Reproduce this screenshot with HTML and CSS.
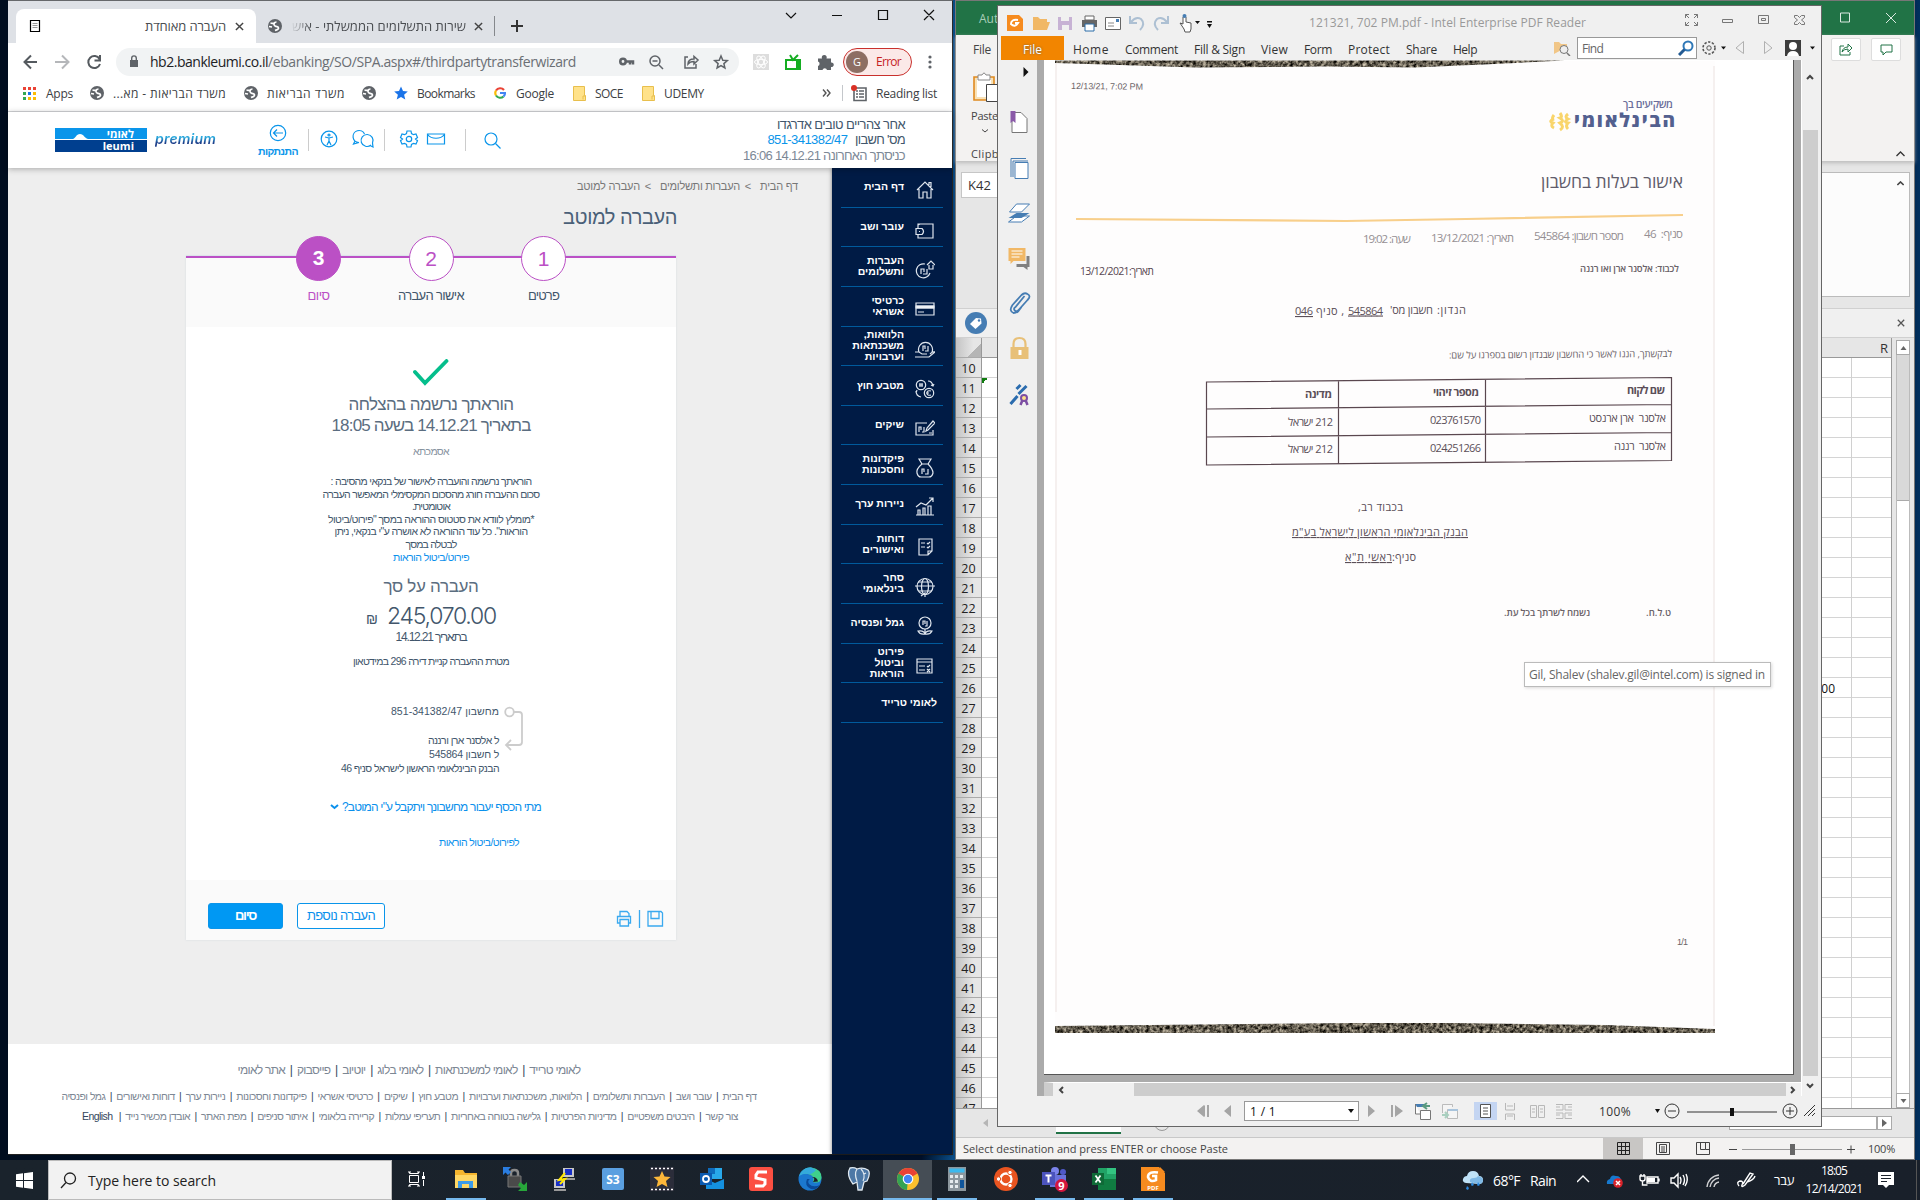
FILE: index.html
```html
<!DOCTYPE html>
<html lang="en">
<head>
<meta charset="utf-8">
<title>Desktop</title>
<link rel="stylesheet" href="styles.css">
</head>
<body>
<svg class="defs" width="0" height="0">
  <symbol id="globe" viewBox="0 0 16 16"><circle cx="8" cy="8" r="7" fill="#5f6368"/><path d="M3.500 5c1.500.3 2.500 1 4 0M9.500 4C7 4 6 7 8 8s3.500 0 3.500 2-2.500 2-3.500 2.500M2 8.500l3 .5" fill="none" stroke="#fff" stroke-width="1.700"/></symbol>
  <symbol id="x" viewBox="0 0 10 10"><path d="M1 1l8 8M9 1L1 9" fill="none" stroke="currentColor" stroke-width="1.600"/></symbol>
  <symbol id="folder" viewBox="0 0 13 15"><path d="M.5.5h11v9h1v5H.5z" fill="#ffe28a" stroke="#e8bf4d"/><path d="M10 13.500V10h2" fill="none" stroke="#e8bf4d"/></symbol>
  <symbol id="down" viewBox="0 0 6 4"><path d="M0 0h6L3 4z" fill="#111"/></symbol>
</svg>

<div class="desktop">

<!-- Browser window -->
<section class="chrome">
  <div class="tabstrip">
    <div class="tab active">
      <svg width="12" height="14" viewBox="0 0 12 14"><path d="M1.500 1.500h9v11h-9z" fill="#fff" stroke="#000" stroke-width="1.200"/><path d="M3.500 4.500h5M3.500 6.500h5M3.500 8.500h5" stroke="#999"/></svg>
      <span class="tab-title" dir="rtl" data-w="81">העברה מאוחדת</span>
      <svg class="tx" width="9" height="9"><use href="#x"/></svg>
    </div>
    <div class="tab">
      <svg width="16" height="16"><use href="#globe"/></svg>
      <span class="tab-title faded" dir="rtl" data-w="174">שירות התשלומים הממשלתי - איש</span>
      <svg class="tx" width="9" height="9"><use href="#x"/></svg>
    </div>
    <svg class="plus" width="14" height="14" viewBox="0 0 14 14"><path d="M7 1v12M1 7h12" stroke="#333" stroke-width="2"/></svg>
    <svg class="wc" width="160" height="14" viewBox="0 0 160 14"><path d="M6 5l5 5 5-5M52 7.500h10M98.500 2.500h9v9h-9zM144 2l10 10M154 2l-10 10" fill="none" stroke="#111" stroke-width="1.200"/></svg>
  </div>
  <div class="toolbar">
    <svg class="nav" width="84" height="16" viewBox="0 0 84 16"><g fill="none" stroke-width="2"><path d="M15 8H2.500M9 1.500 2.500 8 9 14.500" stroke="#555a5f"/><path d="M33 8h13M40 1.500 46.500 8 40 14.500" stroke="#b5b7ba"/><path d="M77.500 5A6 6 0 1 0 78 10M78 1v5.500H72.500" stroke="#555a5f"/></g></svg>
    <div class="omnibox">
      <svg width="10" height="13" viewBox="0 0 10 13"><path d="M1 5h8v7H1z" fill="#5f6368"/><path d="M2.700 5V3.200a2.300 2.300 0 0 1 4.600 0V5" fill="none" stroke="#5f6368" stroke-width="1.400"/></svg>
      <span class="url"><span data-w="118">hb2.bankleumi.co.il</span><span class="path" data-w="308">/ebanking/SO/SPA.aspx#/thirdpartytransferwizard</span></span>
      <svg class="oicons" width="112" height="16" viewBox="0 0 112 16"><g fill="none" stroke="#5f6368" stroke-width="1.500"><circle cx="5" cy="7.500" r="2.700" stroke-width="2.600"/><path d="M8 7.500h7v3M12 7.500v3" stroke-width="2.500"/><circle cx="37" cy="7" r="5"/><path d="M34.500 7h5M41 11l4 4"/><path d="M70 3h-3v11h11v-4"/><path d="M70 10c0-4 3-5 6-5V2.500L80 6l-4 4V7.500c-3 0-4.500.5-6 2.500z"/><path d="M103 2l1.800 4.200 4.500.4-3.400 3 1 4.400-3.900-2.400L99.100 14l1-4.400-3.400-3 4.500-.4z"/></g></svg>
    </div>
    <svg class="ext" width="82" height="18" viewBox="0 0 82 18"><path d="M1 1h16v16H1z" fill="#ddd"/><g fill="none" stroke="#fff"><ellipse cx="9" cy="9" rx="6.500" ry="2.700"/><ellipse cx="9" cy="9" rx="6.500" ry="2.700" transform="rotate(60 9 9)"/><ellipse cx="9" cy="9" rx="6.500" ry="2.700" transform="rotate(120 9 9)"/></g><path d="M34 7h14v9H34zM38 2l3 5 5-5" fill="none" stroke="#15ad22" stroke-width="2"/><path d="M44 7h4v9h-4z" fill="#15ad22"/><path d="M66 5.500h4a2.500 2.500 0 1 1 4.500 0H79v4a2.300 2.300 0 1 1 0 4.500v3h-4a2.300 2.300 0 0 0-4.500 0H66v-4a2.400 2.400 0 0 0 0-4.500z" fill="#5f6368"/></svg>
    <div class="profile"><span class="avatar">G</span><span data-w="25">Error</span></div>
    <svg width="4" height="14" viewBox="0 0 4 14"><g fill="#5f6368"><circle cx="2" cy="2" r="1.600"/><circle cx="2" cy="7" r="1.600"/><circle cx="2" cy="12" r="1.600"/></g></svg>
  </div>
  <div class="bookmarks">
    <svg width="13" height="13" viewBox="0 0 13 13"><path d="M0 0h3v3H0zM5 0h3v3H5zM10 0h3v3h-3z" fill="#ea4335"/><path d="M0 5h3v3H0zM0 10h3v3H0z" fill="#34a853"/><path d="M5 5h3v3H5z" fill="#1a73e8"/><path d="M10 5h3v3h-3zM5 10h3v3H5zM10 10h3v3h-3z" fill="#fbbc04"/></svg>
    <span data-w="27">Apps</span>
    <svg width="16" height="16"><use href="#globe"/></svg>
    <span dir="ltr" data-w="113">...משרד הבריאות - מא</span>
    <svg width="16" height="16"><use href="#globe"/></svg>
    <span dir="rtl" data-w="78">משרד הבריאות</span>
    <svg width="16" height="16"><use href="#globe"/></svg>
    <svg width="14" height="14" viewBox="0 0 14 14"><path d="M7 .5l2 4.600 4.800.4-3.700 3.200 1.200 4.800L7 11l-4.300 2.500 1.200-4.800L.2 5.500 5 5.100z" fill="#1a73e8"/></svg>
    <span data-w="58">Bookmarks</span>
    <svg width="12" height="12" viewBox="0 0 12 12"><g fill="none" stroke-width="2.200"><path d="M10 3A5 5 0 0 0 2 3.500" stroke="#ea4335"/><path d="M2 3.500a5 5 0 0 0 0 5" stroke="#fbbc04"/><path d="M2 8.500a5 5 0 0 0 7.500 1" stroke="#34a853"/><path d="M6 6h5a5 5 0 0 1-1.500 3.500" stroke="#4285f4"/></g></svg>
    <span data-w="38">Google</span>
    <svg width="13" height="15"><use href="#folder"/></svg>
    <span data-w="28">SOCE</span>
    <svg width="13" height="15"><use href="#folder"/></svg>
    <span data-w="40">UDEMY</span>
    <svg width="9" height="8" viewBox="0 0 9 8"><path d="M1 .5 4 4 1 7.500M5 .5 8 4 5 7.500" fill="none" stroke="#555" stroke-width="1.400"/></svg>
    <i class="bsep"></i>
    <svg width="16" height="17" viewBox="0 0 16 17"><path d="M3 3h12v12.500H3z" fill="none" stroke="#5f6368" stroke-width="1.600"/><path d="M5 6h2M5 9h2M5 12h2M8 6h5M8 9h5M8 12h5" stroke="#5f6368" stroke-width="1.400"/><circle cx="3" cy="3" r="3" fill="#d93025"/></svg>
    <span data-w="61">Reading list</span>
  </div>

  <header class="bank-head">
    <div class="leumi"><b dir="rtl">לאומי</b><b>leumi</b><svg width="20" height="6" viewBox="0 0 20 6"><path d="M2 6c3-1 3-5 7-5s4 4 8 5z" fill="#fff"/></svg></div>
    <span class="premium" data-w="61">premium</span>
    <div class="logout"><svg width="18" height="18" viewBox="0 0 18 18"><g fill="none" stroke="#0a95ea" stroke-width="1.200"><circle cx="9" cy="9" r="7.700"/><path d="M14 9H4.500M8 5.500 4.500 9 8 12.500"/></g></svg><span dir="rtl" data-w="40">התנתקות</span></div>
    <svg class="hicons" width="200" height="24" viewBox="0 0 200 24"><path d="M3.500 1v22M79.500 1v22M160.500 1v22" stroke="#ccc"/><g fill="none" stroke="#0a95ea" stroke-width="1.200"><circle cx="24" cy="11" r="7.800"/><path d="M20 9l4 1 4-1M24 10v3l-2 4M24 13l2 4"/><circle cx="24" cy="7" r="1"/><path d="M54 14.500A6 6 0 1 1 59.500 6M54 14.500 48.500 16l1.500-3"/><path d="M66 17a6 6 0 1 1 1.500-2l.5 4-3-1.500"/><circle cx="104" cy="11" r="2.700"/><path d="M102 3h4l.5 2.500 2 1.200 2.500-.7 1.500 3.500-2 1.500 2 1.700-1.500 3.300-2.500-.7-2 1.200-.5 2.500h-4l-.5-2.500-2-1.200-2.500.7-1.500-3.300 2-1.700-2-1.500L97 6l2.500.7 2-1.200z"/><path d="M122.500 6h17v10h-17zM122.500 6.500c4 5 13 5 17 0"/><circle cx="186" cy="11" r="6"/><path d="M190.500 15.500l5 5"/></g></svg>
    <div class="greet" dir="rtl"><span data-w="128">אחר צהריים טובים אדרגדו</span><span><span data-w="50">מס' חשבון</span> <em data-w="80" dir="ltr">851-341382/47</em></span><span class="last" data-w="162">כניסתך האחרונה 14.12.21 16:06</span></div>
  </header>

  <div class="bank-main">
    <div class="content" dir="rtl">
      <nav class="crumbs"><span data-w="38">דף הבית</span><i>&gt;</i><span data-w="80">העברות ותשלומים</span><i>&gt;</i><span data-w="63">העברה למוטב</span></nav>
      <h1><span data-w="114">העברה למוטב</span></h1>
      <div class="card">
        <ol class="steps">
          <li><b>1</b><span data-w="31">פרטים</span></li>
          <li><b>2</b><span data-w="66">אישור העברה</span></li>
          <li class="on"><b>3</b><span data-w="22">סיום</span></li>
        </ol>
        <div class="result">
          <svg class="check" width="36" height="27" viewBox="0 0 36 27"><path d="M2 13l10 11L33.500 2" fill="none" stroke="#05be8c" stroke-width="3.800" stroke-linecap="round"/></svg>
          <p class="big"><span data-w="165">הוראתך נרשמה בהצלחה</span></p>
          <p class="big"><span data-w="199">בתאריך 14.12.21 בשעה 18:05</span></p>
          <p class="ref"><span data-w="36">אסמכתא</span></p>
          <div class="note">
            <p><span data-w="201">הוראתך נרשמה והועברה לאישור של בנקאי מהסיבה :</span></p>
            <p><span data-w="217">סכום ההעברה חורג מהסכום המקסימלי המאפשר העברה</span></p>
            <p><span data-w="38">אוטומטית.</span></p>
            <p><span data-w="206">*מומלץ לוודא את סטטוס ההוראה במסך "פירוט/ביטול</span></p>
            <p><span data-w="193">הוראות". כל עוד ההוראה לא אושרה ע"י בנקאי, ניתן</span></p>
            <p><span data-w="51">לבטלה במסך</span></p>
            <p class="link"><span data-w="76">פירוט/ביטול הוראות</span></p>
          </div>
          <p class="sumlabel"><span data-w="95">העברה על סך</span></p>
          <p class="amount"><span data-w="109">245,070.00</span><small>₪</small></p>
          <p class="on-date"><span data-w="71">בתאריך 14.12.21</span></p>
          <p class="purpose"><span data-w="156">מטרת ההעברה קניית דירה 296 במידטאון</span></p>
          <div class="route">
            <svg width="20" height="46" viewBox="0 0 20 46"><g fill="none" stroke="#ccc" stroke-width="1.800"><circle cx="5.500" cy="6" r="4.300"/><path d="M10 6h5q3 0 3 3v27q0 3-3 3H2M7 34l-5 5 5 5"/></g></svg>
            <div class="lines">
              <p><span data-w="108">מחשבון 851-341382/47</span></p>
              <p class="gap"><span data-w="71">ל אלסנר ארן ורננה</span></p>
              <p><span data-w="70">ל חשבון 545864</span></p>
              <p><span data-w="158">הבנק הבינלאומי הראשון לישראל סניף 46</span></p>
            </div>
          </div>
          <p class="when link"><span data-w="199">מתי הכסף יעבור מחשבונך ויתקבל ע"י המוטב?</span><svg width="9" height="6" viewBox="0 0 9 6"><path d="M1 1l3.500 3L8 1" fill="none" stroke="#0a90ec" stroke-width="2"/></svg></p>
          <p class="details link"><span data-w="80">לפירוט/ביטול הוראות</span></p>
        </div>
        <div class="actions">
          <svg class="io" width="48" height="18" viewBox="0 0 48 18"><g fill="none" stroke="#3aa9ef" stroke-width="1.300"><path d="M4 6V1.500h7l2 2V6M3.500 13H1.500V6.500h13V13h-2M4 9.500h8.500v6.500H4z"/><path d="M23.500 0v18"/><path d="M32 1.500h13l1.500 1.500v13H32zM35 1.500v7h8v-7"/></g></svg>
          <a class="btn ghost"><span data-w="68">העברה נוספת</span></a>
          <a class="btn solid"><span data-w="21">סיום</span></a>
        </div>
      </div>
      <footer class="bank-foot">
        <p class="f1"><span data-w="343">לאומי טרייד <i>|</i> לאומי למשכנתאות <i>|</i> לאומי בלוג <i>|</i> יוטיוב <i>|</i> פייסבוק <i>|</i> אתר לאומי</span></p>
        <p class="f2"><span data-w="695">דף הבית <i>|</i> עובר ושב <i>|</i> העברות ותשלומים <i>|</i> הלוואות, משכנתאות וערבויות <i>|</i> מטבע חוץ <i>|</i> שיקים <i>|</i> כרטיסי אשראי <i>|</i> פיקדונות וחסכונות <i>|</i> ניירות ערך <i>|</i> דוחות ואישורים <i>|</i> גמל ופנסיה</span></p>
        <p class="f3"><span data-w="658">צור קשר <i>|</i> היבטים משפטיים <i>|</i> מדיניות הפרטיות <i>|</i> גלישה בטוחה באחריות <i>|</i> תעריפי עמלות <i>|</i> קריירה בלאומי <i>|</i> איתור סניפים <i>|</i> מפת האתר <i>|</i> אובדן מכשיר נייד <i>|</i> <i>English</i></span></p>
      </footer>
    </div>
    <ul class="side" dir="rtl">
      <li><svg viewBox="0 0 20 20"><path d="M2 10l8-8 8 8M4 9v9h4v-6h4v6h4V9M14 5V2.500h2V7"/></svg><span>דף הבית</span></li>
      <li><svg viewBox="0 0 20 20"><path d="M3 8V4h15v14H3v-3M3 5l2-1M1 8.500h6q3 3 0 6H1zM4 11.500h1"/></svg><span>עובר ושב</span></li>
      <li><svg viewBox="0 0 20 20"><path d="M15 13a7 7 0 1 1-5-9M6 14V9h3v3M8 14h4V9M12 5l4-4 4 4M14 5v4h4V5"/></svg><span>העברות<br>ותשלומים</span></li>
      <li><svg viewBox="0 0 20 20"><path d="M1 4h18v12H1zM1 7h18M1 9h18M3 13h6"/><path d="M1 7h18v2H1z" fill="#fff"/></svg><span>כרטיסי<br>אשראי</span></li>
      <li><svg viewBox="0 0 20 20"><path d="M4 13a7 7 0 1 1 13 0M8 12V7h2v3M10 12h3V7M0 13h4l3 2h5M0 18h14l6-5q-2-1-5 2"/></svg><span>הלוואות,<br>משכנתאות<br>וערבויות</span></li>
      <li><svg viewBox="0 0 20 20"><circle cx="6" cy="6" r="4.700"/><circle cx="14" cy="14" r="4.700"/><path d="M5 4v4M7 4v4M4 6h4M16 12q-4-1-4 2t4 2M11 14h3M13 2q4 0 5 5M16 6l2 1 1-2M1 12q0 5 5 6M1 14l1-3"/></svg><span>מטבע חוץ</span></li>
      <li><svg viewBox="0 0 20 20"><path d="M12 5H1v12h17v-5M4 14V9h2v3M7 14h2V9M11 13l1-3 6-7 2 2-7 7zM14 15h3"/></svg><span>שיקים</span></li>
      <li><svg viewBox="0 0 20 20"><path d="M7 6L4 1h12l-3 5M6 6h8M7 6q-6 5-5 9 1 4 4 4h8q3 0 4-4 0-4-5-9M7 16v-5h2v3M10 16h3v-5"/></svg><span>פיקדונות<br>וחסכונות</span></li>
      <li><svg viewBox="0 0 20 20"><path d="M1 18h18M3 18v-5h2v5M8 18v-7h2v7M13 18V9h3v9M1 10l5-4 5 2 7-7M14 1h4v4"/></svg><span>ניירות ערך</span></li>
      <li><svg viewBox="0 0 20 20"><path d="M4 2h13v12l-4 4H4zM13 18v-4h4M6 6h4M6 10h4M12 6l1 1 2-2M12 10l1 1 2-2"/></svg><span>דוחות<br>ואישורים</span></li>
      <li><svg viewBox="0 0 20 20"><circle cx="10" cy="9.500" r="8"/><ellipse cx="10" cy="9.500" rx="3.500" ry="8"/><path d="M0 9h20M3 5h14M4 14h13M6 19l4-3v4"/></svg><span>סחר<br>בינלאומי</span></li>
      <li><svg viewBox="0 0 20 20"><circle cx="10" cy="7" r="6"/><path d="M8 9V5h2v3M10 10h2V5M10 13v5M3 15q6-1 7 3-5 1-7-3zM17 15q-6-1-7 3 5 1 7-3z"/></svg><span>גמל ופנסיה</span></li>
      <li><svg viewBox="0 0 20 20"><path d="M2 3h15v14H2zM2 6h15M4 10h6M4 14h6M12 10l1 1 2-2M12 13l3 3M15 13l-3 3"/></svg><span>פירוט<br>וביטול<br>הוראות</span></li>
      <li class="trade"><span>לאומי טרייד</span></li>
    </ul>
  </div>
</section>

<!-- Spreadsheet window -->
<section class="excel">
  <div class="x-title"><span>Aut</span><svg width="56" height="12" viewBox="0 0 56 12"><path d="M-.5 1h9v9h-9zM45 1l10 10M55 1L45 11" fill="none" stroke="#dceae2"/></svg></div>
  <div class="x-ribbon">
    <div class="x-clip">
      <span class="x-file" data-w="18">File</span>
      <svg width="28" height="32" viewBox="0 0 28 32"><path d="M2 6h20v23H2z" fill="#f8e2b8" stroke="#e08a20" stroke-width="1.600"/><path d="M5 7h14v19H5z" fill="#fff"/><path d="M6 4h4q2-4 4 0h4v5H6z" fill="#fff" stroke="#888"/><path d="M14.500 13.500H28v17H14.500z" fill="#fff" stroke="#444"/></svg>
      <span data-w="27">Paste</span>
      <svg class="chev" width="6" height="4" viewBox="0 0 6 4"><path d="M0 .5 3 3 6 .5" fill="none" stroke="#444"/></svg>
      <span data-w="28">Clipb</span>
    </div>
    <div class="x-share">
      <div class="x-btns"><b><svg width="14" height="13" viewBox="0 0 14 13"><path d="M5 3H1v9h10V9M3 9q1-5 6-5V1l4 4-4 4V6Q5 6 3 9z" fill="none" stroke="#217346"/></svg></b><b><svg width="13" height="12" viewBox="0 0 13 12"><path d="M1 1h11v7H6l-3 3V8H1z" fill="none" stroke="#217346"/></svg></b></div>
      <svg class="up" width="9" height="6" viewBox="0 0 9 6"><path d="M.5 5l4-4 4 4" fill="none" stroke="#333" stroke-width="1.300"/></svg>
    </div>
  </div>
  <div class="x-formula"><span class="x-name">K42</span><span class="x-fx"><svg width="7" height="5" viewBox="0 0 9 6"><path d="M.5 5l4-4 4 4" fill="none" stroke="#444" stroke-width="2"/></svg></span></div>
  <div class="x-label"><svg width="22" height="22" viewBox="0 0 22 22"><circle cx="11" cy="11" r="11" fill="#467db3"/><path d="M5 12l6-6 5 .5.500 5-6 5.500z" fill="#fff"/><circle cx="14" cy="8.500" r="1.200" fill="#467db3"/></svg><svg width="8" height="8"><use href="#x"/></svg></div>
  <div class="x-sheet">
    <div class="x-rows" id="rows"><span class="corner"></span></div>
    <div class="x-grid"><div class="x-cols"><span>R</span></div><div class="x-cells"><i class="tri"></i><span class="c00">00</span></div></div>
    <div class="x-vscroll"><b><svg width="7" height="4" viewBox="0 0 6 4"><path d="M0 4h6L3 0z" fill="#666"/></svg></b><i></i><b><svg width="7" height="4" viewBox="0 0 6 4"><path d="M0 0h6L3 4z" fill="#666"/></svg></b></div>
  </div>
  <div class="x-tabs"><svg width="5" height="8" viewBox="0 0 5 8"><path d="M5 0v8L0 4z" fill="#b5b5b5"/></svg><i class="sheet"></i><i class="add"></i><i class="hs"></i><b><svg width="5" height="8" viewBox="0 0 5 8"><path d="M0 0v8l5-4z" fill="#666"/></svg></b></div>
  <div class="x-status"><span data-w="265">Select destination and press ENTER or choose Paste</span>
    <i class="view"><svg width="13" height="13" viewBox="0 0 13 13"><path d="M.5.5h12v12H.5zM4.500 0v13M8.500 0v13M0 4.500h13M0 8.500h13" fill="none" stroke="#222"/></svg></i>
    <svg class="views" width="188" height="14" viewBox="0 0 188 14"><g fill="none" stroke="#444"><path d="M.5.5h13v12H.5zM3.500 2.500h7v8h-7zM5 5h4M5 7h4M5 9h4M40.500.5h13v12h-13zM44.500.5v7h5v-7M49.500 7.500h4M73 7.500h8"/><path d="M86 7.500h100" stroke="#999"/><path d="M191 7.500h8M195 3.500v8"/></g><path d="M134 2h5v11h-5z" fill="#666"/></svg>
    <span class="pct" data-w="27">100%</span></div>
</section>

<!-- PDF reader window -->
<section class="pdf">
  <div class="p-title">
    <svg width="212" height="20" viewBox="0 0 212 20"><path d="M1 2h12l4 4v12H1z" fill="#f68b1f"/><path d="M12 7q-7-1-7 4 4 4 7-1H9" fill="none" stroke="#fff" stroke-width="2"/><path d="M27 17V4h5l2 2h7v4M27 17l4-8h13l-3 8z" fill="#f1b866"/><path d="M52 4h14v13H52z" fill="#c7b2d4"/><path d="M55 4h8v4h-8zM56 12h7v5h-7z" fill="#f0f0f0"/><path d="M79 3h9v4h-9z" fill="#fff" stroke="#666"/><path d="M76 7h15v7H76z" fill="#666"/><path d="M79 11h9v7h-9z" fill="#fff" stroke="#2b6da8"/><path d="M99.500 4.500h15v12h-15z" fill="#fff" stroke="#666"/><path d="M102 10h6M102 13h6" stroke="#888"/><path d="M110 6h3v3h-3z" fill="#467db3"/><g fill="none" stroke="#adc0d3" stroke-width="2"><path d="M125 9q5-6 10-3 5 5-1 11M124 3v7h7M161 9q-5-6-10-3-5 5 1 11M162 3v7h-7"/></g><path d="M178 16l-4-6 3 1V4q2-2 3 0v5l5 1v6l-1 3h-5z" fill="#fff" stroke="#555"/><circle cx="178.500" cy="3" r="2" fill="#467db3"/><path d="M189 8h5l-2.500 3zM201 11h5l-2.500 4zM201 8h5v1.500h-5z" fill="#111"/></svg>
    <span class="p-name" data-w="277">121321, 702 PM.pdf - Intel Enterprise PDF Reader</span>
    <svg class="p-wc" width="124" height="16" viewBox="0 0 124 16"><g fill="none" stroke="#777"><path d="M1.500 6V2.500H5M1.500 2.500 5 6M13.500 6V2.500H10M13.500 2.500 10 6M1.500 10v3.500H5M1.500 13.500 5 10M13.500 10v3.500H10M13.500 13.500 10 10M38.500 7.500h10v3h-10zM74.500 3.500h10v8h-10zM77.500 6.500h4v2h-4zM110.500 3.500h3l2 2 2-2h3v2l-3 2.500 3 2.500v2h-3l-2-2-2 2h-3v-2l3-2.500-3-2.500z"/></g></svg>
  </div>
  <div class="p-menu">
    <b>File</b><span data-w="36">Home</span><span data-w="53">Comment</span><span data-w="51">Fill &amp; Sign</span><span data-w="27">View</span><span data-w="28">Form</span><span data-w="42">Protect</span><span data-w="31">Share</span><span data-w="24">Help</span>
    <svg class="fs" width="17" height="15" viewBox="0 0 17 15"><path d="M0 13V1h5l2 2h6v3M0 13h6" fill="#f1c687"/><circle cx="10" cy="8.500" r="4" fill="#eee" stroke="#777"/><path d="M13 12l3 3" stroke="#777" stroke-width="1.500"/></svg>
    <div class="find"><span data-w="21">Find</span><svg width="16" height="16" viewBox="0 0 16 16"><circle cx="10" cy="6" r="4.500" fill="#fff" stroke="#2f78b7" stroke-width="2"/><path d="M6.500 9.500 1 15" stroke="#235a92" stroke-width="3"/></svg></div>
    <svg width="116" height="18" viewBox="0 0 116 18"><g fill="none" stroke="#555"><circle cx="8" cy="9" r="6" stroke-width="1.600" stroke-dasharray="2.300 1.500"/><circle cx="8" cy="9" r="2.200"/><path d="M42.500 2.500v12L35 9zM63.500 2.500v12L71 9z" stroke="#b0b0b0"/></g><path d="M20 7.500h5l-2.500 3zM109 7.500h5l-2.500 3z" fill="#111"/><path d="M84 1h16v16H84z" fill="#3c3c3c"/><circle cx="92" cy="7" r="4" fill="#fff"/><path d="M86 17q1-5 6-5t6 5z" fill="#fff"/></svg>
  </div>
  <div class="p-body">
    <svg class="p-rail" width="38" height="360" viewBox="0 0 38 360"><path d="M25 7v10l5-5z" fill="#111"/><path d="M13.500 52.500h9l6 6v14h-15z" fill="#fff" stroke="#777"/><path d="M12 51h5v12l-2.500-2-2.500 2z" fill="#8a5aa8"/><path d="M12.500 117V98.500h15M14.500 117v-16h15" fill="none" stroke="#467db3"/><path d="M16.500 102.500h13v16h-13z" fill="#fff" stroke="#467db3"/><path d="M10 162l8-6h13l-8 6z" fill="#fff" stroke="#467db3"/><path d="M10 158l8-5h13l-8 5z" fill="#467db3"/><path d="M11 152l7-8h13l-8 8z" fill="#fff" stroke="#467db3"/><path d="M28 196h3v11h-2v3l-4-3h-7v-3h10z" fill="#808080"/><path d="M10 188h17v13H15l-3 3v-3h-2z" fill="#f1b866"/><path d="M13 191h11M13 194h11M13 197h8" stroke="#fff"/><path d="M26 236l-9 11q-3 2 0 4 2 1 4-2l8-9q4-4 0-6-3-2-6 1l-9 10q-4 6 1 8 3 0 5-2l3-4" fill="none" stroke="#467db3" stroke-width="1.800"/><path d="M15 288v-4q0-6 6-6t6 6v4" fill="none" stroke="#e8c078" stroke-width="2.200"/><path d="M12 287h18v12H12z" fill="#e8c078"/><path d="M20 290h3v5h-3z" fill="#fff"/><path d="M12 344l7-8M20 334l8-8M18 329l4-4" stroke="#2b6cae" stroke-width="3"/><path d="M24 340l-2 5M27 340l2 5" stroke="#7d4fa3" stroke-width="2.500"/><circle cx="25.500" cy="338" r="3" fill="#ffe08a" stroke="#7d4fa3" stroke-width="2"/></svg>
    <i class="split"></i>
    <div class="p-view">
      <div class="p-page">
        <svg class="scan" width="660" height="973" viewBox="1055 60 660 973" lang="he">
          <defs><filter id="carpet" x="0" y="0" width="1" height="1" color-interpolation-filters="sRGB"><feTurbulence type="fractalNoise" baseFrequency=".3" numOctaves="3" seed="4"/><feColorMatrix values="1.300 0 0 0 -.26 1.250 0 0 0 -.26 1.150 0 0 0 -.26 0 0 0 0 1"/><feComposite in2="SourceGraphic" operator="in"/></filter></defs>
          <path d="M1055 61h660v972H1055z" fill="#fefdfd"/><path d="M1056 62v950M1714 66v960" stroke="#f5f0ef" stroke-width="2"/>
          <path d="M1055 60.500h510l-60 3-90 4-90-1-130 1-90-3-50-1.500z" fill="#665" filter="url(#carpet)"/>
          <path d="M1055 1026l300-3h100l150 2 110 4v4h-660z" fill="#665" filter="url(#carpet)"/>
          <text x="1071" y="89" class="ar" textLength="72" transform="rotate(.6 1071 90)">12/13/21, 7:02 PM</text>
          <g class="he">
            <text x="1673" y="108" class="brand1" textLength="50">משקיעים בך</text>
            <text x="1675" y="127" class="brand2" textLength="101">הבינלאומי</text>
            <path d="M1554 115q-3 4 0 4-6 2-1 4-3 3 1 5M1560 113q3 4 0 5 5 3 0 5 5 4 0 7M1568 114q-4 3 0 5-5 3 0 4-3 3 0 6" fill="none" stroke="#f9d56b" stroke-width="3"/>
            <text x="1683" y="188" class="t" textLength="142">אישור בעלות בחשבון</text>
            <path d="M1076 219l270 2 120-2 217-4" fill="none" stroke="#f8cf8b" stroke-width="2.200"/>
            <g class="m"><text x="1683" y="238" textLength="39">סניף:&#160; 46</text><text x="1624" y="240" textLength="90">מספר חשבון: 545864</text><text x="1514" y="241.500" textLength="83">תאריך: 13/12/2021</text><text x="1411" y="242.500" textLength="48">שעה: 19:02</text></g>
            <text x="1679" y="271.500" class="s b" textLength="99">לכבוד: אלסנר ארן ואו רננה</text>
            <text x="1154" y="275" class="d" textLength="74">תאריך:13/12/2021</text>
            <g class="k"><text x="1466" y="314" textLength="29">הנדון:</text><text x="1433" y="314" textLength="43">חשבון מס'</text><text x="1383" y="314.500" textLength="35" class="u">545864</text><text x="1344" y="315" textLength="28">, סניף</text><text x="1313" y="315" textLength="18" class="u">046</text></g>
            <text x="1672" y="357" class="s" textLength="223" transform="rotate(-.4 1672 358)">לבקשתך, הננו לאשר כי החשבון שבנדון רשום בספרנו על שם:</text>
            <path d="M1206.500 382l465-4.500v83l-465 4.500zM1206.500 409l465-4.500M1206.500 437l465-4.500M1338.500 381v83M1485.500 379.500v83" fill="none" stroke="#5a474f" stroke-width="1.200"/>
            <g class="k"><g class="h"><text x="1665" y="394" textLength="38">שם לקוח</text><text x="1479" y="396" textLength="46">מספר זיהוי</text><text x="1332" y="398" textLength="27">מדינה</text></g>
            <text x="1666" y="422" textLength="77">אלסנר&#160; ארן ארנסט</text><text x="1481" y="424" textLength="51">023761570</text><text x="1333" y="425.500" textLength="45">212 ישראל</text>
            <text x="1666" y="450" textLength="52">אלסנר&#160; רננה</text><text x="1481" y="452" textLength="51">024251266</text><text x="1333" y="453" textLength="45">212 ישראל</text>
            <text x="1403" y="510.500" textLength="45">בכבוד רב,</text><text x="1468" y="536" textLength="176" class="u">הבנק הבינלאומי הראשון לישראל בע"מ</text><text x="1416" y="561" textLength="24">סניף:</text><text x="1392" y="561" textLength="47" class="u">ראשי ת"א</text></g>
            <text x="1671" y="616" class="s b" textLength="25">ט.ל.ח.</text><text x="1590" y="616" class="s b" textLength="86">נשמח לשרתך בכל עת.</text>
          </g>
          <text x="1677" y="945" class="ar" textLength="11">1/1</text>
        </svg>
      </div>
      <div class="p-hscroll"><svg width="6" height="8" viewBox="0 0 6 8"><path d="M5 1 2 4l3 3" fill="none" stroke="#444" stroke-width="2"/></svg><i></i><svg width="6" height="8" viewBox="0 0 6 8"><path d="M1 1l3 3-3 3" fill="none" stroke="#444" stroke-width="2"/></svg></div>
    </div>
    <div class="p-vscroll"><svg width="8" height="6" viewBox="0 0 8 6"><path d="M1 5l3-3 3 3" fill="none" stroke="#444" stroke-width="2"/></svg><i></i><svg width="8" height="6" viewBox="0 0 8 6"><path d="M1 1l3 3 3-3" fill="none" stroke="#444" stroke-width="2"/></svg></div>
  </div>
  <div class="p-status">
    <svg width="36" height="14" viewBox="0 0 36 14"><path d="M7 1v12L0 7zM10 1h2v12h-2zM8 1v12L1 7zM34 1v12l-7-6z" fill="#a5a5a5"/></svg>
    <div class="page"><span data-w="26">1 / 1</span><svg width="6" height="4"><use href="#down"/></svg></div>
    <svg width="208" height="20" viewBox="0 0 208 20"><path d="M0 4v12l7-6zM23 4h2v12h-2zM27 4v12l8-6z" fill="#a5a5a5"/><path d="M47 3h10v3H47z" fill="#467db3"/><path d="M47.500 3v10H52M52.500 9.500h10v9h-10z" fill="#fff" stroke="#777"/><path d="M62 5h-6M59 2l-4 3 4 3" fill="none" stroke="#5a9a7f" stroke-width="2"/><path d="M74.500 12V3.500h10V6M79.500 8.500h10v9h-10z" fill="#f5f5f5" stroke="#bbb"/><path d="M80 8h10v2H80z" fill="#a9c4dc"/><path d="M74 14h6M77 11l3 3-3 3" fill="none" stroke="#a9cfbf" stroke-width="2"/><g transform="translate(-2)"><path d="M108 1h23v18h-23z" fill="#c4d5f2"/><path d="M114.500 3.500h10v13h-10z" fill="#fff" stroke="#555"/><path d="M117 7h5M117 10h5M117 13h5" stroke="#555"/><g fill="none" stroke="#b8b8b8"><path d="M139.500 2v7h9V2M139.500 19v-6h9v6M141 5h6M141 15h6M164.500 4.500h6v12h-6zM172.500 4.500h6v12h-6zM166 8h3M166 11h3M174 8h3M174 11h3M190 3.500h7V9h-7M206 3.500h-7V9h7M190 17.500h7V12h-7M206 17.500h-7V12h7M190 6h4M202 6h4M190 14h4M202 14h4"/></g></g></svg>
    <span class="zoom" data-w="32">100%</span>
    <svg width="166" height="20" viewBox="0 0 166 20"><path d="M3 8h5l-2.500 4z" fill="#111"/><g fill="none" stroke="#333"><circle cx="20" cy="10" r="7"/><path d="M16 10h8M35 11h90M134 10h8M138 6v8M152 15L163 4M156 15l7-7M160 15l3-3"/><circle cx="138" cy="10" r="7"/></g><path d="M78 7h4v8h-4z" fill="#111"/></svg>
  </div>
</section>
<div class="tip"><span data-w="236">Gil, Shalev (shalev.gil@intel.com) is signed in</span></div>

<!-- Taskbar -->
<footer class="taskbar">
  <div class="start"><svg width="17" height="17" viewBox="0 0 17 17"><path d="M0 2.300 7 1.300V8H0zM8 1.200 17 0v8H8zM0 9h7v6.700l-7-1zM8 9h9v8l-9-1.200z" fill="#fff"/></svg></div>
  <div class="search"><svg width="17" height="17" viewBox="0 0 17 17"><circle cx="10" cy="6.500" r="5.500" fill="none" stroke="#222" stroke-width="1.300"/><path d="M6 10.500 1 16" stroke="#222" stroke-width="1.300"/></svg><span data-w="128">Type here to search</span></div>
  <div class="apps">
    <span class="tv"><svg width="17" height="16" viewBox="0 0 17 16"><path d="M0 1h3M9 1h3M0 15h3M9 15h3M1.500 4.500h9v7h-9zM1.500 1v1.500h9V1M1.500 15v-1.500h9V15M15.500 1v4M15.500 9v6" fill="none" stroke="#fff"/><path d="M14 5h3v3h-3z" fill="#fff"/></svg></span>
    <span class="run"><svg viewBox="0 0 24 24"><path d="M1 3h8l2 3h12v14H1z" fill="#f5b52e"/><path d="M1 8h22v13H1z" fill="#ffd764"/><path d="M4 21v-7h15v7h-4v-4H8v4z" fill="#3c9be8"/></svg></span>
    <span><svg viewBox="0 0 24 24"><path d="M8 9V6q0-3 3.500-3T15 6v3" fill="none" stroke="#8a8a8a" stroke-width="2.500"/><path d="M5 9h13v11H5z" fill="#4a4a4a" stroke="#777"/><path d="M0 0h8L5.500 2.500 8 5 5 8 2.500 5.500 0 8z" fill="#2a7de0"/><path d="M24 24h-9l3-3-3-3 2-3 4 3 3-3z" fill="#27a63a"/></svg></span>
    <span><svg viewBox="0 0 24 24"><path d="M11 1h11v9H11zM2 12h11v9H2z" fill="#c7c7c7"/><path d="M13 2h7v6h-7zM4 13h7v6H4z" fill="#1830c8"/><path d="M2 22h12v2H2zM11 11h12v2H11z" fill="#999"/><path d="M13 6l-6 7 6-1-5 5" fill="none" stroke="#ffe600" stroke-width="2"/></svg></span>
    <span><svg viewBox="0 0 24 24"><rect x="1" y="1" width="22" height="22" rx="2" fill="#5a9fe0"/><text x="12" y="17" text-anchor="middle" class="s3">S3</text></svg></span>
    <span><svg viewBox="0 0 24 24"><path d="M0 0h24v24H0z" fill="#2b2d3a"/><path d="M1 1.500h22M1 22.500h22" stroke="#fff" stroke-width="1.500" stroke-dasharray="2 2"/><path d="M12 4l2.500 5.500 6 .6-4.500 4L17.500 20 12 17l-5.500 3L8 14.100l-4.500-4 6-.6z" fill="#fdb73a"/></svg></span>
    <span><svg viewBox="0 0 24 24"><path d="M8 1h14v11H8z" fill="#28a8ea"/><path d="M8 1h7v6H8z" fill="#0f6cbd"/><path d="M6 12l9 4 9-4v10H6z" fill="#1490df"/><path d="M0 6h12v12H0z" fill="#0a5ab0"/><circle cx="6" cy="12" r="3" fill="none" stroke="#fff" stroke-width="1.800"/></svg></span>
    <span><svg viewBox="0 0 24 24"><rect width="24" height="24" rx="3" fill="#fb4f42"/><path d="M18 5H9L7 8v3l9 2v4l-2 2H6" fill="none" stroke="#fff" stroke-width="3"/></svg></span>
    <span><svg viewBox="0 0 24 24"><circle cx="12" cy="12" r="11.500" fill="#1b78cf"/><path d="M1 9Q5 0 13 .5 24 2 23.500 11 22 17 15 15q2-7-5-8T1 9z" fill="#3fd08c"/><path d="M1 9Q5 0 13 .5L18 3q-4 5-8 4T1 9z" fill="#35a9dc"/><path d="M9 12q-3 7 4 10 6 1 9-4-7 3-11-1-2-3 1-5z" fill="#0a4a9a"/><path d="M14 10q4 1 1 5l5-.5q-1-5-6-4.500z" fill="#1a2029"/></svg></span>
    <span><svg viewBox="0 0 24 24"><path d="M3 1q4-1 7 1 6-2 11 1 3 3-1 11l-3 1-2 8h-4l-1-8-4 2Q-1 8 3 1z" fill="#4d78a6" stroke="#dfe8f0" stroke-width="1.300"/><path d="M10 2q-3 5 0 12M14 2q5 5 2 12M17 7l2-1M8 7h1" fill="none" stroke="#dfe8f0" stroke-width="1.200"/></svg></span>
    <span class="run cur"><svg viewBox="0 0 24 24"><circle cx="12" cy="12" r="11" fill="#fbc02d"/><path d="M12 12L2.500 6.500A11 11 0 0 1 21.500 6.500z" fill="#e94235"/><path d="M12 12 2.500 6.500A11 11 0 0 0 11 23z" fill="#34a353"/><circle cx="12" cy="12" r="5.300" fill="#fff"/><circle cx="12" cy="12" r="4.200" fill="#4285f4"/></svg></span>
    <span class="run"><svg viewBox="0 0 24 24"><path d="M3 0h18v24H3z" fill="#8c979e"/><path d="M4.500 1.500h15v4h-15z" fill="#3bb9ee"/><path d="M5 8h3v3H5zM10 8h3v3h-3zM15 8h3v3h-3zM5 13h3v3H5zM10 13h3v3h-3zM5 18h3v3H5zM10 18h3v3h-3z" fill="#e5ebee"/><path d="M15 13h4v8h-4z" fill="#0f559b"/></svg></span>
    <span><svg viewBox="0 0 24 24"><circle cx="12" cy="12" r="12" fill="#e95420"/><circle cx="12" cy="12" r="5.500" fill="none" stroke="#fff" stroke-width="2.300"/><g fill="#fff" stroke="#e95420"><circle cx="4.500" cy="12" r="2.200"/><circle cx="16" cy="5.500" r="2.200"/><circle cx="16" cy="18.500" r="2.200"/></g></svg></span>
    <span class="run"><svg class="wide" viewBox="0 0 26 26"><circle cx="13" cy="5" r="4" fill="#7b83eb"/><circle cx="21" cy="6" r="3" fill="#5059c9"/><path d="M8 9h16v12H8z" fill="#6a72dd"/><path d="M0 6h13v13H0z" fill="#4b53bc"/><path d="M3.500 9.500h6M6.500 9.500v7" stroke="#fff" stroke-width="2"/><circle cx="19.500" cy="19.500" r="6.500" fill="#d3163d"/><text x="19.500" y="23.500" text-anchor="middle" class="nine">9</text></svg></span>
    <span class="run"><svg viewBox="0 0 24 24"><path d="M6 1h18v22H6z" fill="#21a366"/><path d="M15 1h9v6h-9z" fill="#33c481"/><path d="M6 12h18v11H6z" fill="#107c41"/><path d="M0 6h12v12H0z" fill="#0f6a37"/><path d="M3.500 8.500l5 7M8.500 8.500l-5 7" stroke="#fff" stroke-width="1.800"/></svg></span>
    <span class="run"><svg viewBox="0 0 24 24"><path d="M0 0h18l6 6v18H0z" fill="#f68b1f"/><path d="M17 5.500Q7 4 7 10q2 6 8 3V9h-4" fill="none" stroke="#fff" stroke-width="2.600"/><text x="12" y="22.500" text-anchor="middle" class="pdft">PDF</text><path d="M19 0v5h5z" fill="#f68b1f"/></svg></span>
  </div>
  <div class="tray">
    <svg width="22" height="22" viewBox="0 0 22 22"><path d="M4 14q-4-1-3-4 1-3 4-3 1-5 6-5t6 5q4 0 4 4t-4 4z" fill="#bfe2f7"/><path d="M8 13q-1-4 4-4 3 0 4-2 5 1 5 4 0 4-4 4z" fill="#7fb9e6"/><path d="M5 17l2 2-1 2-2-1zM10 13l2 3-2 1-1-1zM16 13l2 3-2 1-1-1z" fill="#2b8ae2"/></svg>
    <span class="temp"><span data-w="27">68°F</span><span data-w="26">Rain</span></span>
    <svg class="ticons" width="190" height="20" viewBox="0 0 190 20"><g fill="none" stroke="#fff" stroke-width="1.400"><path d="M0 12l6-6 6 6M70 7h11v6H70zM82 8.500v3M63 6h5v3q0 2-2.500 2T63 9zM64 4v2M67 4v2M65.500 11v4h5"/><path d="M94 8v5h3l4 4V4L97 8zM103 7q2 3 0 7M106 5q3 5 0 10M109 4q3 6-1 12"/><path d="M130 17A13 13 0 0 1 142 5M133 17a10 10 0 0 1 9-9M137 17a6 6 0 0 1 5-5" opacity=".8"/><path d="M162 16q-3-4 1-5 4 0 2 4-1 3 3 0l8-11-3-1-7 11M170 12q7-2 8-6"/></g><path d="M70 8h8v4h-8z" fill="#fff"/><path d="M30 14q-1-4 3-5 1-5 6-3 5 0 5 5v3z" fill="#1679cf"/><circle cx="41" cy="13" r="4.800" fill="#d8232a"/><path d="M39 11l4 4M43 11l-4 4" stroke="#fff" stroke-width="1.500"/></svg>
    <span class="lang" dir="rtl" data-w="20">עבר</span>
    <span class="clock"><span data-w="26">18:05</span><span data-w="57">12/14/2021</span></span>
    <svg width="16" height="16" viewBox="0 0 16 16"><path d="M0 0h16v13h-5l-3 3-3-3H0z" fill="#fff"/><path d="M3 3.500h10M3 6.500h10M3 9.500h6" stroke="#1b222b"/></svg>
    <i class="peek"></i>
  </div>
</footer>
</div>
<script src="app.js"></script>
</body>
</html>
```
FILE: app.js
```js
// Row headers 10 to 47 of the worksheet.
const rows = document.getElementById('rows');
for (let n = 10; n <= 47; n++) {
  const s = document.createElement('span');
  s.textContent = n;
  rows.append(s);
}

// Track each label so that its text run has the width given in data-w.
for (const el of document.querySelectorAll('[data-w]')) {
  const r = document.createRange();
  r.selectNodeContents(el);
  const w = r.getBoundingClientRect().width;
  el.style.letterSpacing = ((+el.dataset.w - w) / el.textContent.length).toFixed(3) + 'px';
}
```
FILE: styles.css
```css
* { box-sizing: border-box; }
body { margin: 0; font-family: "Open Sans", "Liberation Sans", sans-serif; font-size: 12px; color: #333; overflow: hidden; }
p, h1, ul, ol { margin: 0; padding: 0; list-style: none; }
i, em { font-style: normal; }
svg { flex: none; display: block; }
span[data-w] { white-space: nowrap; }
.defs { position: absolute; }
.desktop { position: relative; width: 1920px; height: 1200px; background: linear-gradient(90deg, #000d1f 0, #001029 48%, #0a4c86 49.600%, #001b3a 99%, #00305f 100%); overflow: hidden; }

/* Browser */
.chrome { position: absolute; left: 8px; top: 0; width: 945px; height: 1155px; background: #fff; border-top: 1px solid #66686b; border-right: 1px solid #2a2a2a; border-bottom: 1px solid #222; display: flex; flex-direction: column; }
.tabstrip { height: 42px; background: #dee1e6; display: flex; align-items: center; padding: 8px 15px 0 8px; }
.tab { height: 34px; width: 240px; display: flex; align-items: center; padding: 0 12px 0 13px; gap: 9px; color: #4a4d51; }
.tab.active { background: #fff; border-radius: 8px 8px 0 0; }
.tab + .tab { width: 239px; padding: 0 11px 0 11px; border-right: 1px solid #85888c; height: 20px; gap: 8px; }
.tab-title { flex: 1; font-size: 13px; line-height: 20px; overflow: hidden; text-align: right; direction: rtl; }
.faded { -webkit-mask-image: linear-gradient(90deg, transparent, #000 20px); mask-image: linear-gradient(90deg, transparent, #000 20px); }
.tx { color: #444; }
.plus { margin-left: 15px; }
.wc { margin: -22px -3px 0 auto; }
.toolbar { height: 37px; display: flex; align-items: center; padding: 0 20px 0 14px; flex: none; }
.nav { margin-right: 10px; }
.omnibox { width: 623px; height: 28px; border-radius: 14px; background: #f1f3f4; display: flex; align-items: center; padding: 0 9px 0 13px; gap: 11px; }
.url { font-size: 14px; color: #202124; width: 428px; white-space: nowrap; }
.path { color: #6b6f74; }
.oicons { margin-left: auto; }
.ext { margin: 0 9px 0 13px; }
.profile { width: 69px; height: 28px; border: 1px solid #c9302c; border-radius: 14px; background: #fbe9e8; display: flex; align-items: center; gap: 8px; padding-left: 2px; color: #c5221f; margin-right: 16px; font-size: 12px; }
.avatar { width: 22px; height: 22px; border-radius: 50%; background: #8d6e63; color: #fff; text-align: center; line-height: 22px; font-size: 11px; }
.bookmarks { height: 32px; flex: none; border-bottom: 1px solid #d4d6d9; display: grid; grid-template-columns: 23px 43px 24px 130px 24px 94px 33px 23px 77px 22px 57px 22px 47px 22px 158px 20px 9px 25px 68px; justify-items: start; align-items: center; padding: 0 0 5px 15px; white-space: nowrap; font-size: 12px; color: #3c4043; }
.bsep { width: 1px; height: 16px; background: #c4c7cb; }

.bank-head { height: 56px; flex: none; display: flex; align-items: center; padding: 0 47px; position: relative; box-shadow: 0 1px 6px rgba(0,0,0,.3); z-index: 1; background: #fff; }
.leumi { position: relative; width: 92px; height: 24px; background: linear-gradient(#0a95ea 0 11px, #fff 11px 12px, #003f8f 12px); color: #fff; font-size: 11px; line-height: 12px; text-align: right; padding-right: 13px; }
.leumi b { display: block; line-height: 11px; height: 12px; }
.leumi svg { position: absolute; left: 16px; top: 5px; }
.premium { margin: -4px 0 0 8px; width: 61px; font: italic 600 14px "Inter", sans-serif; background: linear-gradient(#2ba8dc 45%, #1f3f8a 75%); -webkit-background-clip: text; background-clip: text; color: transparent; }
.logout { width: 44px; margin: 4px 0 0 40px; display: flex; flex-direction: column; align-items: center; color: #0a95ea; font: bold 10.500px/19px "Liberation Sans", sans-serif; }
.hicons { margin-left: 5px; }
.greet { margin-left: auto; display: flex; flex-direction: column; width: 170px; font: 13px/15.500px "Liberation Sans", sans-serif; color: #42566b; white-space: nowrap; }
.greet em { color: #0a95ea; display: inline-block; margin-right: 4px; }
.greet .last { color: #7c8896; }

.bank-main { flex: 1; display: flex; min-height: 0; font-family: "Liberation Sans", sans-serif; }
.content { width: 824px; background: #eee; display: flex; flex-direction: column; }
.crumbs { display: flex; padding: 10px 34px 0 0; font-size: 11px; line-height: 16px; color: #777; }
.crumbs i { width: 20px; text-align: center; padding-right: 4px; }
h1 { font-size: 20px; font-weight: 400; line-height: 30px; color: #4a6078; padding: 8px 155px 0 0; }
.card { width: 490px; margin: 24px 156px 0 0; border-top: 2px solid #bb50c5; height: 684px; background: #fff; display: flex; flex-direction: column; box-shadow: 0 -1px 0 #dde3ea, 0 0 2px #d5dbe0; }
.steps { height: 69px; background: #fafafa; display: flex; justify-content: flex-start; padding-right: 98px; font-size: 13px; color: #42566b; flex: none; }
.steps li { width: 69px; margin-left: 43.500px; display: flex; flex-direction: column; align-items: center; margin-top: -22px; }
.steps b { width: 45px; height: 45px; border-radius: 50%; border: 1px solid #bb50c5; background: #fff; color: #bb50c5; font: 21px/43px "Liberation Sans"; text-align: center; margin-bottom: 6px; }
.steps .on { color: #bb50c5; }
.steps .on b { background: #bb50c5; color: #fff; font-weight: 700; line-height: 41px; }
.steps span { line-height: 18px; }
.result { flex: 1; text-align: center; color: #42566b; font-size: 10.500px; }
.result p { white-space: nowrap; }
.check { margin: 32px auto 8px; }
.big { font-size: 17px; line-height: 21px; color: #5b6d80; }
.ref { margin-top: 7px; line-height: 16px; color: #87939f; }
.note { margin-top: 16px; line-height: 12.600px; }
.link { color: #0a90ec; }
.sumlabel { font-size: 17px; line-height: 20px; margin-top: 14px; color: #5b6d80; }
.amount { display: flex; justify-content: center; align-items: baseline; gap: 9px; font: 300 23px/32px "Inter", sans-serif; margin-top: 3px; }
.amount small { font: 14px "Liberation Sans"; }
.on-date { line-height: 11px; font-size: 12px; }
.purpose { margin-top: 11px; line-height: 14px; }
.route { margin-top: 36px; display: flex; padding-right: 152px; gap: 5px; text-align: right; }
.route svg { margin-top: 2px; }
.lines p { line-height: 14px; }
.lines p.gap { margin-top: 15px; }
.when { display: flex; justify-content: flex-start; padding-right: 135px; align-items: center; gap: 3px; margin-top: 24px; line-height: 16px; font-size: 12px; }
.details { margin-top: 19px; line-height: 16px; text-align: right; padding-right: 157px; }
.actions { height: 60px; background: #fafafa; display: flex; align-items: center; padding: 11px 12px 0 22px; flex: none; }
.io { margin-top: 6px; margin-left: auto; }
.btn { height: 26px; border-radius: 3px; border: 1px solid #0a95ea; text-align: center; line-height: 23px; font-size: 13px; color: #0a90ec; white-space: nowrap; }
.ghost { width: 88px; background: #fff; margin-left: 14px; }
.solid { width: 75px; background: #0098f3; color: #fff; font-weight: 700; }
.bank-foot { margin-top: auto; height: 110px; background: #fff; text-align: center; color: #7c8794; padding: 17px 22px 0 0; white-space: nowrap; }
.bank-foot i { color: #33465c; padding: 0 2px; }
.f1 { font-size: 12px; line-height: 18px; }
.f2 { font-size: 10.500px; line-height: 18px; margin-top: 8px; }
.f3 { font-size: 10.500px; line-height: 18px; margin-top: 1.500px; }

.side { flex: 1; background: #001b45; padding: 0 9px; color: #fff; font-weight: 700; font-size: 10.500px; line-height: 11px; box-shadow: 0 0 4px rgba(0,0,0,.5); }
.side li { height: 39.650px; border-bottom: 1px solid #005a9c; display: flex; align-items: center; gap: 11px; padding: 0 8px 0 0; white-space: nowrap; }
.side span { margin-top: -1px; }
.side .trade { padding-right: 6px; }
.side svg { width: 20px; height: 20px; margin-top: 6px; fill: none; stroke: #dfe6ee; stroke-width: 1.200; }

/* Spreadsheet */
.excel { position: absolute; left: 955px; top: 0; width: 960px; height: 1160px; background: #e6e6e6; border: 1px solid #777; display: flex; flex-direction: column; font-size: 12px; }
.x-title { height: 34px; background: #217346; color: #a9cdb8; display: flex; align-items: center; justify-content: space-between; padding: 0 17px 0 23px; flex: none; }
.x-title svg { overflow: visible; }
.x-ribbon { height: 126px; flex: none; background: #f3f2f1; display: flex; justify-content: space-between; box-shadow: 0 2px 4px #bbb; }
.x-clip { width: 70px; padding: 6px 0 0 15px; line-height: 17px; display: flex; flex-direction: column; color: #444; font-size: 11px; }
.x-file { font-size: 12px; padding-left: 2px; margin-bottom: 13px; }
.x-clip svg { margin-left: 1px; margin-bottom: 4px; }
.x-clip .chev { margin: 5px 0 12px 11px; }
.x-share { width: 94px; padding: 3px 9px 1px 0; display: flex; flex-direction: column; justify-content: space-between; align-items: flex-end; }
.x-btns { display: flex; gap: 10px; padding-right: 4px; }
.x-btns b { width: 30px; height: 23px; background: #fff; border: 1px solid #ddd; border-radius: 2px; display: grid; place-items: center; }
.up { margin: 0 0 3px; }
.x-formula { height: 147px; flex: none; display: flex; padding: 11px 4px 11px 5px; align-items: flex-start; }
.x-name { width: 100px; height: 26px; background: #fff; border: 1px solid #c6c6c6; padding: 0 6px; font-size: 13px; line-height: 24px; }
.x-fx { flex: 1; align-self: stretch; background: #fcfcfc; border: 1px solid #bbb; display: flex; justify-content: flex-end; padding: 8px 5px; }
.x-label { height: 30px; flex: none; border: 1px solid #d0d0d0; border-width: 1px 0; background: #f0f0f0; display: flex; align-items: center; justify-content: space-between; padding: 0 9px 0 9px; color: #555; }
.x-sheet { height: 771px; flex: none; display: flex; overflow: hidden; border-bottom: 1px solid #999; }
.x-rows { width: 26px; font-size: 12.500px; display: flex; flex-direction: column; border-right: 1px solid #999; background: linear-gradient(90deg, #c4c4c4, #e6e6e6 70%); color: #222; }
.x-rows span { height: 20px; flex: none; line-height: 21px; text-align: center; border-bottom: 1px solid #aaa; }
.x-rows .corner { background: linear-gradient(135deg, transparent 70%, #b5b5b5 70%); }
.x-grid { width: 910px; border-right: 1px solid #999; display: flex; flex-direction: column; }
.x-cols { height: 20px; flex: none; border-bottom: 1px solid #999; text-align: right; padding-right: 3px; line-height: 20px; font-size: 13px; }
.x-cells { flex: 1; background: linear-gradient(#d0d0d0, #d0d0d0) 869px 0 / 1px 100% no-repeat, repeating-linear-gradient(#fff 0 19px, #d4d4d4 19px 20px); }
.tri { display: block; width: 6px; height: 6px; margin-top: 20px; background: linear-gradient(135deg, #107c10 50%, transparent 50%); }
.c00 { display: block; margin: 295px 56px 0 0; text-align: right; color: #111; line-height: 20px; }
.x-vscroll { width: 22px; padding: 2px 4px 0; background: #e6e6e6; display: flex; flex-direction: column; }
.x-vscroll b { height: 15px; border: 1px solid #aaa; background: #fff; display: grid; place-items: center; }
.x-vscroll i { flex: 1; background: linear-gradient(#d9d9d9 145px, #aaa 145px 146px, #fff 146px); border: solid #bbb; border-width: 0 1px; }
.x-tabs { height: 28px; flex: none; display: flex; align-items: center; padding: 0 22px 0 27px; }
.sheet { width: 65px; height: 25px; align-self: flex-start; background: #fff; border-bottom: 2px solid #217346; margin-left: 68px; }
.add { width: 16px; height: 16px; border: 1px solid #999; border-radius: 50%; margin: 0 auto 0 33px; }
.hs { width: 148px; height: 14px; background: #fff; border: 1px solid #aaa; }
.x-tabs b { width: 15px; height: 14px; background: #fff; border: 1px solid #aaa; display: grid; place-items: center; }
.x-status { height: 21px; flex: 1; border-top: 1px solid #c8c8c8; background: #f3f2f1; display: flex; align-items: center; padding: 0 18px 0 7px; color: #444; font-size: 11px; }
.view { width: 40px; align-self: stretch; background: #c8c6c4; display: grid; place-items: center; margin-left: auto; }
.views { margin-left: 13px; overflow: visible; }
.pct { width: 28px; margin-left: 24px; }

/* PDF reader */
.pdf { position: absolute; left: 997px; top: 5px; width: 825px; height: 1122px; background: #f0f0f0; border: 1px solid #666; display: flex; flex-direction: column; }
.p-title { height: 30px; flex: none; display: flex; align-items: center; padding: 3px 13px 0 8px; }
.p-name { color: #999; margin-left: 91px; font-size: 12px; }
.p-wc { margin: -5px 0 0 auto; }
.p-menu { height: 24px; flex: none; display: flex; align-items: center; padding: 0 4px 0 3px; font-size: 12px; white-space: nowrap; color: #333; }
.p-menu b { width: 63px; height: 24px; background: #f28500; color: #fff; text-align: center; line-height: 28px; font-weight: 400; margin-right: 9px; text-shadow: 0 0 2px #555; }
.p-menu span { margin-right: 16px; line-height: 24px; padding-top: 3px; }
.p-menu .fs { margin-left: auto; margin-right: 6px; }
.find { width: 120px; height: 22px; background: #fff; border: 1px solid #999; display: flex; align-items: center; justify-content: space-between; padding: 0 2px 0 4px; margin-right: 4px; color: #666; }
.p-menu .find span { line-height: 20px; padding-top: 1px; }
.p-body { height: 1036px; flex: none; display: flex; }
.p-rail { width: 39px; }
.split { width: 7px; background: #ababab; }
.p-view { width: 757px; display: flex; flex-direction: column; background: #ababab; }
.p-page { height: 1015px; width: 750px; background: #fff; border: 1px solid #555; border-width: 0 1px 1px 0; padding-left: 11px; }
.scan text { font-size: 11px; fill: #8a8488; }
.scan .ar { font: 9px "Liberation Sans"; fill: #6c6468; }
.he text { direction: rtl; font-family: "Open Sans", "Liberation Sans", sans-serif; }
.he .brand1 { fill: #6a6d9a; font-size: 10.500px; font-weight: 600; }
.he .brand2 { fill: #53608f; font-size: 19px; font-weight: 800; }
.he .t { font-size: 17.500px; fill: #615c6b; }
.m text { font-size: 11.500px; fill: #958f93; }
.he .s { font-size: 9.500px; fill: #6a6268; }
.he .b { font-weight: 600; }
.he .d { font-size: 10.500px; fill: #574650; }
.k text { fill: #5b4f58; }
.k .h text { font-weight: 700; }
.u { text-decoration: underline; }
.p-hscroll { height: 14px; margin-top: 7px; background: #f0f0f0; border-top: 1px solid #fff; border-left: 9px solid #ccc; display: flex; align-items: center; justify-content: space-between; padding: 0 5px; }
.p-hscroll i { flex: 1; align-self: stretch; margin: 0 4px 0 70px; background: #cdcdcd; }
.p-vscroll { width: 17px; border-left: 1px solid #fff; display: flex; flex-direction: column; align-items: center; justify-content: space-between; padding: 14px 0 7px; background: #f0f0f0; }
.p-vscroll i { flex: 1; width: 15px; background: #cdcdcd; margin: 50px 0 7px; }
.p-status { flex: 1; display: flex; align-items: center; padding: 0 3px 0 199px; }
.page { width: 115px; height: 20px; flex: none; background: #fff; border: 1px solid #999; margin: 0 9px 0 11px; display: flex; align-items: center; justify-content: space-between; padding: 0 4px 0 5px; font-size: 12px; color: #111; }
.zoom { margin: 0 21px 0 auto; font-size: 12px; }
.tip { position: absolute; left: 1524px; top: 662px; width: 247px; height: 25px; background: #fff; border: 1px solid #bbb; color: #666; line-height: 23px; padding-left: 4px; box-shadow: 1px 1px 3px rgba(0,0,0,.15); white-space: nowrap; }

/* Taskbar */
.taskbar { position: absolute; left: 0; bottom: 0; width: 1920px; height: 40px; background: linear-gradient(90deg, #1a232c, #19202a); display: flex; color: #fff; }
.start { width: 48px; display: grid; place-items: center; }
.search { width: 344px; background: #f2f2f2; border: 1px solid #bbb; display: flex; align-items: center; gap: 11px; padding-left: 11px; color: #222; font-size: 14px; }
.apps { display: flex; }
.apps span { width: 49.100px; height: 40px; display: grid; place-items: center; border-bottom: 2px solid transparent; background-clip: padding-box; }
.apps .tv { width: 49.500px; }
.apps svg { width: 24px; height: 24px; }
.apps .tv svg { width: 17px; height: 16px; }
.apps .wide { width: 26px; height: 26px; }
.apps .run { background: linear-gradient(#76b9ed, #76b9ed) center 38px / 40px 2px no-repeat border-box; }
.apps .cur { background: linear-gradient(#76b9ed, #76b9ed) 0 38px / 49px 2px no-repeat border-box, #454d55; }
.s3 { font: bold 12px "Open Sans"; fill: #fff; }
.nine { font: bold 11px "Open Sans"; fill: #fff; }
.pdft { font: bold 6px "Open Sans"; fill: #fff; }
.tray { margin-left: auto; display: flex; align-items: center; white-space: nowrap; }
.temp { display: flex; gap: 10px; font-size: 14px; margin-left: 9px; }
.ticons { margin-left: 21px; }
.lang { margin-left: 7px; font-size: 13px; width: 20px; }
.clock { width: 58px; margin: 0 15px 0 11px; display: flex; flex-direction: column; align-items: center; font-size: 12px; line-height: 18px; }
.peek { width: 4px; height: 40px; border-left: 1px solid #555; margin-left: 22px; }
```
